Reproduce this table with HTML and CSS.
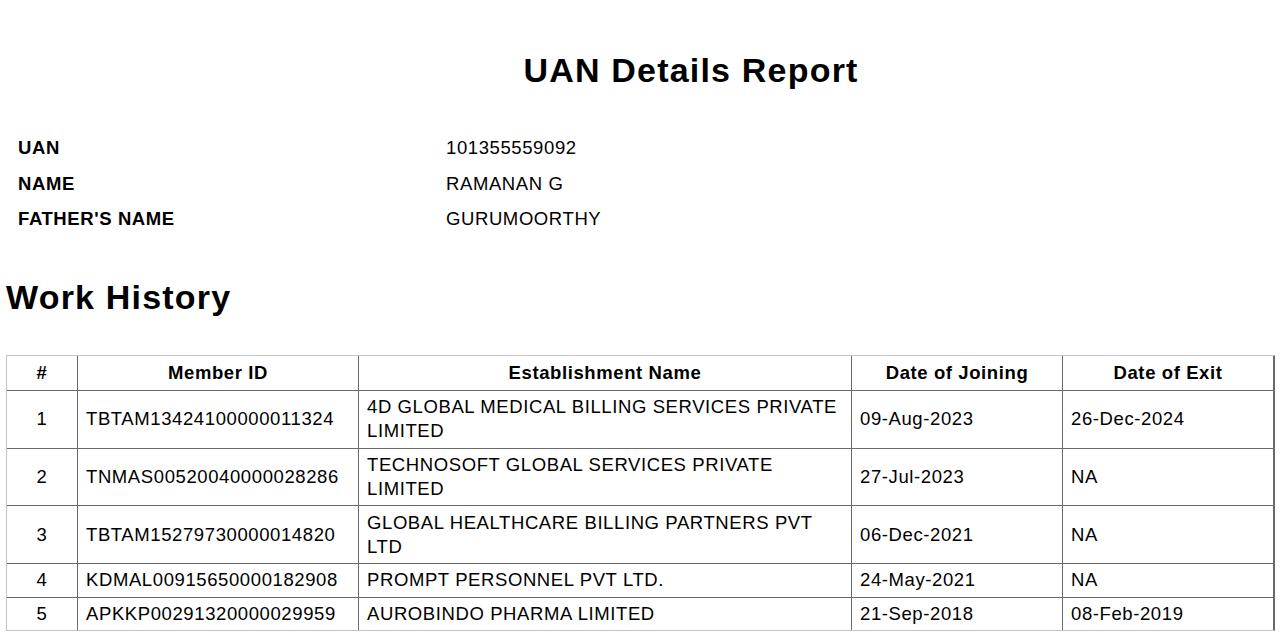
FILE: index.html
```html
<!DOCTYPE html>
<html lang="en">
<head>
<meta charset="utf-8">
<title>UAN Details Report</title>
<link rel="stylesheet" href="styles.css">
</head>
<body>
<h1 class="report-title">UAN Details Report</h1>

<div class="info">
  <div class="info-row"><div class="info-label">UAN</div><div class="info-value">101355559092</div></div>
  <div class="info-row"><div class="info-label">NAME</div><div class="info-value">RAMANAN G</div></div>
  <div class="info-row"><div class="info-label">FATHER'S NAME</div><div class="info-value">GURUMOORTHY</div></div>
</div>

<h2 class="section-title">Work History</h2>

<table class="history">
  <thead>
    <tr>
      <th class="c-num">#</th>
      <th class="c-id">Member ID</th>
      <th class="c-est">Establishment Name</th>
      <th class="c-doj">Date of Joining</th>
      <th class="c-doe">Date of Exit</th>
    </tr>
  </thead>
  <tbody>
    <tr>
      <td class="num">1</td>
      <td>TBTAM13424100000011324</td>
      <td>4D GLOBAL MEDICAL BILLING SERVICES PRIVATE LIMITED</td>
      <td>09-Aug-2023</td>
      <td>26-Dec-2024</td>
    </tr>
    <tr>
      <td class="num">2</td>
      <td>TNMAS00520040000028286</td>
      <td>TECHNOSOFT GLOBAL SERVICES PRIVATE LIMITED</td>
      <td>27-Jul-2023</td>
      <td>NA</td>
    </tr>
    <tr>
      <td class="num">3</td>
      <td>TBTAM15279730000014820</td>
      <td>GLOBAL HEALTHCARE BILLING PARTNERS PVT LTD</td>
      <td>06-Dec-2021</td>
      <td>NA</td>
    </tr>
    <tr>
      <td class="num">4</td>
      <td>KDMAL00915650000182908</td>
      <td>PROMPT PERSONNEL PVT LTD.</td>
      <td>24-May-2021</td>
      <td>NA</td>
    </tr>
    <tr>
      <td class="num">5</td>
      <td>APKKP00291320000029959</td>
      <td>AUROBINDO PHARMA LIMITED</td>
      <td>21-Sep-2018</td>
      <td>08-Feb-2019</td>
    </tr>
  </tbody>
</table>
</body>
</html>
```

FILE: styles.css
```css
html, body {
  margin: 0;
  background: #ffffff;
}

body {
  padding: 0 6px;
  font-family: "Liberation Sans", Arial, sans-serif;
  font-size: 18.5px;
  letter-spacing: 0.6px;
  color: #000;
}

.report-title {
  margin: 50px 0 0;
  padding-left: 100px;
  text-align: center;
  font-size: 34px;
  line-height: 40px;
  font-weight: bold;
  letter-spacing: 1.2px;
}

.info {
  margin-top: 40px;
}

.info-row {
  display: grid;
  grid-template-columns: 428px 1fr;
  padding-left: 12px;
  height: 35.5px;
  line-height: 35.5px;
}

.info-label {
  font-weight: bold;
}

.section-title {
  margin: 40px 0 0;
  font-size: 34px;
  line-height: 40px;
  font-weight: bold;
  letter-spacing: 1.2px;
}

.history {
  margin-top: 38.4px;
  width: 1269px;
  table-layout: fixed;
  border-collapse: separate;
  border-spacing: 0;
  border: 1px solid #c4c4c4;
  border-right-color: #6a6a6a;
}

.history th,
.history td {
  box-sizing: border-box;
  border-right: 1px solid #6a6a6a;
  border-bottom: 1px solid #6a6a6a;
  padding: 4.25px 8px;
  line-height: 24.1px;
  vertical-align: middle;
  text-align: left;
  font-weight: normal;
}

.history tbody tr:last-child td {
  border-bottom: none;
}

.history th {
  padding: 5px 8px;
  line-height: 24px;
  font-weight: bold;
  text-align: center;
}

.history td.num {
  text-align: center;
}

.c-num { width: 71px; }
.c-id { width: 281px; }
.c-est { width: 493px; }
.c-doj { width: 211px; }
.c-doe { width: 211px; }
```
